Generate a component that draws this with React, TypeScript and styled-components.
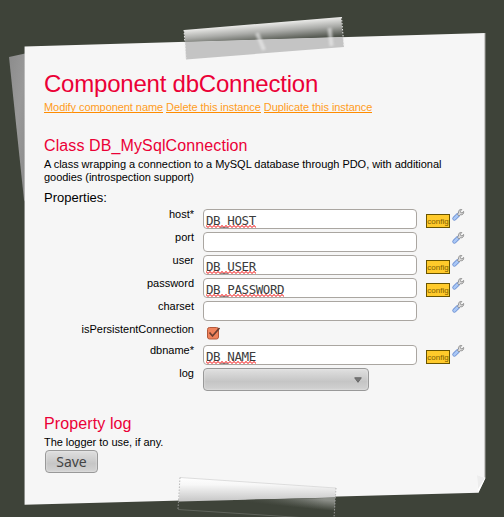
import React from 'react';
import styled, { createGlobalStyle } from 'styled-components';

const GlobalStyle = createGlobalStyle`
  * { box-sizing: border-box; }
  html, body { margin: 0; padding: 0; background: #3e4339; overflow: hidden; }
  body { font-family: "Liberation Sans", Arial, sans-serif; font-size: 11px; color: #000; }
`;

const Desk = styled.main`
  position: relative;
  width: 504px;
  height: 517px;
  padding: 32px 18px 12px 24px;
  overflow: hidden;
  background: #3e4339;
`;

const BackSheet = styled.div`
  position: absolute;
  left: 8px;
  top: 52px;
  width: 24px;
  height: 160px;
  background: linear-gradient(100deg, #8b8b8b, #999 40%, #858585);
  clip-path: polygon(1px 5px, 100% 0, 100% 100%, 16px 148px);
  filter: blur(0.5px);
`;

const Paper = styled.article`
  position: relative;
  width: 462px;
  height: 473px;
  padding: 37px 20px 0;
  background: linear-gradient(to right, #ddd 1px, #f6f6f6 1.5px, #f6f6f6 460px, #a3a3a0 461px);
  clip-path: polygon(0.5px 14.5px, 461.5px 1px, 461.5px 446px, 454.5px 460.7px, 0.5px 472.7px);
`;

const Title = styled.h1`
  margin: 0;
  font-size: 24px;
  font-weight: 400;
  line-height: 30px;
  letter-spacing: -0.22px;
  color: #eb0036;
  white-space: nowrap;
`;

const Links = styled.nav`
  display: flex;
  gap: 3px;
  height: 13px;
  margin-top: 2px;
  letter-spacing: -0.065px;
  white-space: nowrap;
`;

const Action = styled.a`
  height: 12px;
  line-height: 13px;
  color: #ff9c22;
  border-bottom: 1px solid #ff8c00;
`;

const Heading = styled.h2<{ $top: number }>`
  margin: ${(p) => p.$top}px 0 0;
  font-size: 16px;
  font-weight: 400;
  line-height: 20px;
  letter-spacing: 0.11px;
  color: #eb0036;
`;

const Description = styled.p`
  margin: 2px 0 0;
  line-height: 13px;
  letter-spacing: -0.035px;
  white-space: nowrap;
`;

const Caption = styled.div`
  margin-top: 6px;
  font-size: 13px;
  line-height: 16px;
`;

const Form = styled.div`
  display: flex;
  flex-direction: column;
  padding-top: 3px;
`;

const Row = styled.div<{ $height: number }>`
  display: grid;
  grid-template-columns: 150px 214px 24px 14px;
  column-gap: 9px;
  align-items: start;
  height: ${(p) => p.$height}px;
`;

const Label = styled.label`
  margin-top: -1px;
  text-align: right;
  line-height: 12px;
`;

const Field = styled.div`
  width: 214px;
  height: 20px;
  padding: 2px 2px 0;
  border: 1px solid #aaa6a1;
  border-radius: 4px;
  background: #fff;
`;

const Value = styled.span`
  display: inline-block;
  height: 16px;
  font: 12.5px/17px "DejaVu Sans Mono", monospace;
  letter-spacing: -0.42px;
  color: #3c3c3c;
  vertical-align: top;
  background: url("data:image/svg+xml,%3Csvg xmlns='http://www.w3.org/2000/svg' width='4' height='3'%3E%3Cpath d='M-1 -.5 2 2.5 5 -.5' fill='none' stroke='%23f00000' stroke-width='1'/%3E%3C/svg%3E")
    0 100% / 4px 3px repeat-x;
`;

const ConfigBadge = styled.span`
  width: 24px;
  height: 14px;
  margin-top: 5px;
  border: 1px solid #695400;
  background: #ffca2b;
  color: #806000;
  font-size: 8px;
  line-height: 13px;
  text-align: center;
`;

const WrenchIcon = styled.svg`
  grid-column: 4;
  width: 14px;
  height: 14px;
  margin: -1px 0 0 -8px;
`;

const CheckIcon = styled.svg`
  width: 16px;
  height: 15px;
  margin: 2px 0 0 2px;
`;

const Select = styled.div`
  display: flex;
  align-items: center;
  justify-content: flex-end;
  width: 166px;
  height: 23px;
  padding-right: 6px;
  border: 1px solid #999;
  border-radius: 4px;
  background: linear-gradient(#e0e0e0, #c5c5c5 60%, #d2d2d2);
  box-shadow: inset 0 0 2px #eee;
`;

const SaveButton = styled.button`
  display: block;
  width: 53px;
  height: 23px;
  margin: 1px 0 0 1px;
  padding: 0;
  border: 1px solid #999;
  border-radius: 4px;
  background: linear-gradient(#dfdfdf, #c6c6c6 60%, #d3d3d3);
  box-shadow: inset 0 0 2px #eee;
  color: #444;
  font: 14px/21px "Noto Sans", sans-serif;
`;

const Fold = styled.svg`
  position: absolute;
  left: 453px;
  top: 443px;
  width: 9px;
  height: 19px;
`;

const Tape = styled.svg<{ $left: number; $top: number }>`
  position: absolute;
  left: ${(p) => p.$left}px;
  top: ${(p) => p.$top}px;
  width: 170px;
  height: 48px;
  overflow: visible;
`;

const Wrench = () => (
  <WrenchIcon viewBox="0 0 14 14">
    <path d="M3.4 10.6 7 7" stroke="#6f92d4" strokeWidth="4.2" strokeLinecap="round" />
    <path d="M3.4 10.6 6.8 7.2" stroke="#a9c7f5" strokeWidth="2.6" strokeLinecap="round" />
    <path
      d="M6.4 6.1 7.5 5.1C7 2.8 8.5 1 10.8 1.5L9.3 3.2l.4 1.3 1.3.4 1.6-1.5c.5 2.2-1.1 3.9-3.3 3.3L8.1 8Z"
      fill="#dcdcdc"
      stroke="#8d8d8d"
      strokeWidth=".9"
    />
  </WrenchIcon>
);

interface Property {
  name: string;
  value: string;
  config?: boolean;
}

const connection: Property[] = [
  { name: 'host*', value: 'DB_HOST', config: true },
  { name: 'port', value: '' },
  { name: 'user', value: 'DB_USER', config: true },
  { name: 'password', value: 'DB_PASSWORD', config: true },
  { name: 'charset', value: '' },
];

const PropertyRow = ({ name, value, config }: Property) => (
  <Row $height={23}>
    <Label>{name}</Label>
    <Field>{value && <Value>{value}</Value>}</Field>
    {config && <ConfigBadge>config</ConfigBadge>}
    <Wrench />
  </Row>
);

export default function App() {
  return (
    <>
      <GlobalStyle />
      <Desk>
        <BackSheet />
        <Paper>
          <Title>Component dbConnection</Title>
          <Links>
            <Action>Modify component name</Action>
            <Action>Delete this instance</Action>
            <Action>Duplicate this instance</Action>
          </Links>
          <Heading $top={22}>Class DB_MySqlConnection</Heading>
          <Description>
            A class wrapping a connection to a MySQL database through PDO, with additional
            <br />
            goodies (introspection support)
          </Description>
          <Caption>Properties:</Caption>
          <Form>
            {connection.map((p) => (
              <PropertyRow key={p.name} {...p} />
            ))}
            <Row $height={21}>
              <Label>isPersistentConnection</Label>
              <CheckIcon viewBox="0 0 16 15">
                <rect x="2.5" y="1.5" width="11" height="11.5" rx="2" fill="#f0835c" stroke="#b3583a" />
                <path d="M4.5 6.5 7.5 10 14.5 2" fill="none" stroke="#6b3d30" strokeWidth="1.7" />
              </CheckIcon>
            </Row>
            <PropertyRow name="dbname*" value="DB_NAME" config />
            <Row $height={23}>
              <Label>log</Label>
              <Select>
                <svg width="8" height="6" viewBox="0 0 8 6">
                  <path d="M.7.8h6.6L4 5.3Z" fill="#777" stroke="#666" />
                </svg>
              </Select>
            </Row>
          </Form>
          <Heading $top={23}>Property log</Heading>
          <Description>The logger to use, if any.</Description>
          <SaveButton>Save</SaveButton>
          <Fold viewBox="0 0 9 19">
            <path d="M0 0 9 3 1 18Z" fill="#fff" />
            <path d="M0 0 8 3 1 14Z" fill="#ededed" />
          </Fold>
        </Paper>
        <Tape $left={180} $top={14} viewBox="0 0 170 48">
          <defs>
            <linearGradient id="shine" gradientUnits="userSpaceOnUse" x1="82" y1="8.5" x2="83.6" y2="28">
              <stop offset="0" stopColor="#f2f2f0" />
              <stop offset=".5" stopColor="#aaaba8" />
              <stop offset="1" stopColor="#50544c" />
            </linearGradient>
            <filter id="soft"><feGaussianBlur stdDeviation="1" /></filter>
          </defs>
          <path d="M4 16 161 3l2 20L5 28Z" fill="url(#shine)" />
          <path d="M5 28 163 23l1 10L6 45.5Z" fill="#c4c4c4" />
          <path d="M77 19 84 36M149.5 14l2 18" stroke="#eee" strokeOpacity=".6" strokeWidth="4" filter="url(#soft)" />
          <path d="M4 16 6 45M161.5 3 164 33" stroke="#e9e9e9" strokeDasharray="1.5 1.5" />
        </Tape>
        <Tape $left={174} $top={473} viewBox="0 0 170 48">
          <defs>
            <linearGradient id="sheet" x1="0" y1="0" x2="0" y2="1">
              <stop offset="0" stopColor="#fff" />
              <stop offset=".3" stopColor="#f7f7f7" />
              <stop offset="1" stopColor="#c6c6c6" />
            </linearGradient>
            <linearGradient id="glow" gradientUnits="userSpaceOnUse" x1="120" y1="24" x2="119" y2="34">
              <stop offset="0" stopColor="#8b8e88" />
              <stop offset="1" stopColor="#3e4339" />
            </linearGradient>
            <linearGradient id="fade" gradientUnits="userSpaceOnUse" x1="60" y1="0" x2="150" y2="0">
              <stop offset="0" stopColor="#3e4339" />
              <stop offset="1" stopColor="#3e4339" stopOpacity="0" />
            </linearGradient>
          </defs>
          <path d="M6 4.5 162 15l-1 9.5L5 28.5Z" fill="url(#sheet)" />
          <path d="M60 27.3 161 24.7v13L60 35Z" fill="url(#glow)" />
          <path d="M59 27.3 161 24.7v14L59 36Z" fill="url(#fade)" />
          <path d="M6 4.5 162 15" stroke="#ddd" />
          <path d="M4 36.5 134 45" stroke="#686c64" strokeWidth=".8" />
          <path d="M6 4.5 4 36M162 15l-2 30" stroke="#aaa" strokeOpacity=".8" strokeDasharray="1.5 1.5" />
        </Tape>
      </Desk>
    </>
  );
}
